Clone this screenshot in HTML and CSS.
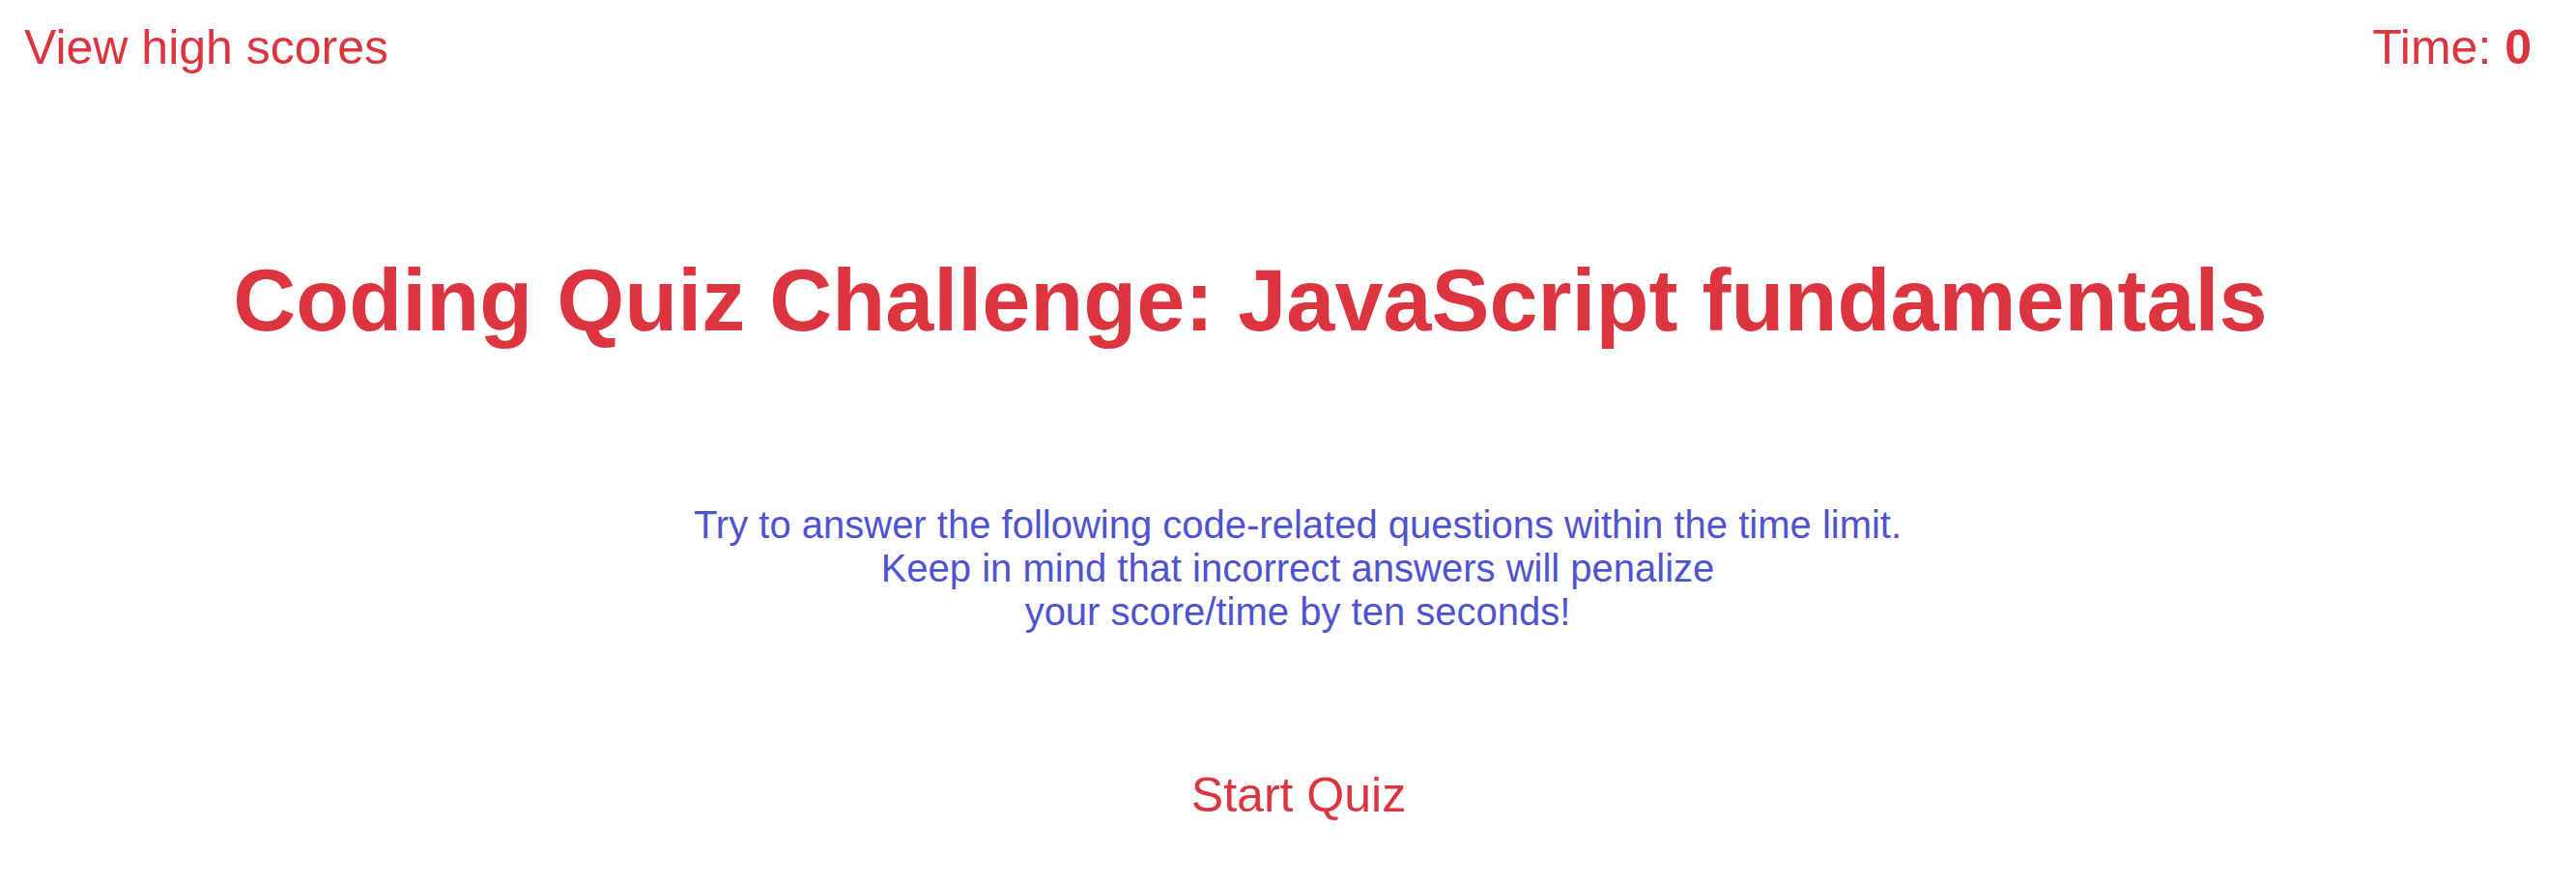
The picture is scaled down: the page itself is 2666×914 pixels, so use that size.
FILE: index.html
```html
<!DOCTYPE html>
<html lang="en">
<head>
<meta charset="utf-8">
<title>Coding Quiz Challenge</title>
<link rel="stylesheet" href="styles.css">
</head>
<body>
<header class="topbar">
  <a class="scores-link" href="#">View high scores</a>
  <div class="timer">Time: <span class="timer-value">0</span></div>
</header>
<main class="intro">
  <h1 class="title">Coding Quiz Challenge: JavaScript fundamentals</h1>
  <p class="lead">Try to answer the following code-related questions within the time limit.<br>Keep in mind that incorrect answers will penalize<br>your score/time by ten seconds!</p>
  <button class="start-btn" type="button">Start Quiz</button>
</main>
</body>
</html>
```

FILE: styles.css
```css
html, body {
  margin: 0;
  padding: 0;
  background: #ffffff;
}

body {
  font-family: "Liberation Sans", Arial, Helvetica, sans-serif;
  color: #dc3540;
}

.topbar {
  display: flex;
  justify-content: space-between;
  align-items: flex-start;
  padding: 20px 46px 0 25px;
  font-size: 50px;
  line-height: normal;
}

.scores-link {
  color: #dc3540;
  text-decoration: none;
}

.timer {
  color: #dc3540;
}

.timer-value {
  font-weight: bold;
}

.intro {
  display: flex;
  flex-direction: column;
  align-items: center;
}

.title {
  margin: 182px 0 0 0;
  padding-right: 78px;
  font-size: 90px;
  font-weight: bold;
  line-height: normal;
  color: #dc3540;
  text-align: center;
}

.lead {
  margin: 158px 0 0 0;
  padding-left: 20px;
  font-size: 40px;
  line-height: normal;
  color: #5053d0;
  text-align: center;
}

.start-btn {
  margin: 138px 0 0 0;
  padding: 0 0 0 22px;
  border: none;
  background: none;
  font-family: inherit;
  font-size: 50px;
  line-height: normal;
  color: #dc3540;
  cursor: pointer;
}
```
